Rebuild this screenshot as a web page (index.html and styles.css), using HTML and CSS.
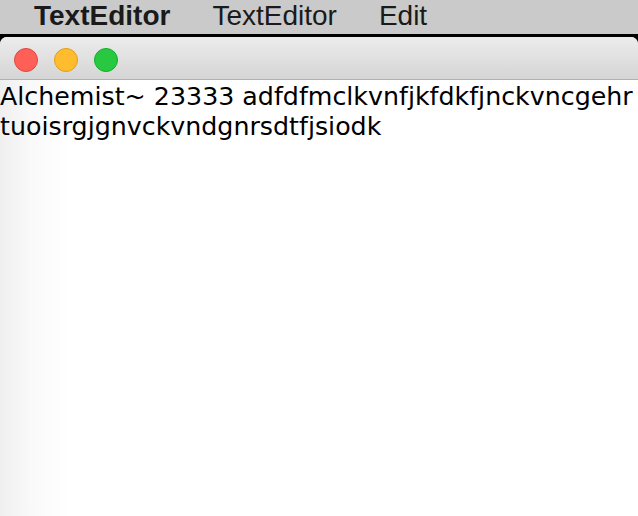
FILE: index.html
```html
<!DOCTYPE html>
<html>
<head>
<meta charset="utf-8">
<link rel="stylesheet" href="styles.css">
</head>
<body>
<div class="menubar">
  <span class="menu-item app">TextEditor</span>
  <span class="menu-item">TextEditor</span>
  <span class="menu-item">Edit</span>
</div>
<div class="window">
  <div class="titlebar">
    <span class="light red"></span>
    <span class="light yellow"></span>
    <span class="light green"></span>
  </div>
  <div class="content">
    <p class="text">Alchemist~ 23333 adfdfmclkvnfjkfdkfjnckvncgehr tuoisrgjgnvckvndgnrsdtfjsiodk</p>
  </div>
</div>
</body>
</html>
```
FILE: styles.css
```css
html, body {
  margin: 0;
  padding: 0;
  width: 638px;
  height: 516px;
  overflow: hidden;
  background: #000;
}
.menubar {
  height: 34px;
  background: #cacaca;
  display: flex;
  align-items: flex-start;
  padding-left: 34px;
  gap: 42px;
  font-family: "Liberation Sans", Arial, sans-serif;
  font-size: 28px;
  line-height: 32px;
  color: #1a1a1a;
  box-sizing: border-box;
}
.menu-item.app {
  font-weight: bold;
}
.window {
  margin-top: 3px;
  height: 479px;
  display: flex;
  flex-direction: column;
  border-radius: 7px 7px 0 0;
  overflow: hidden;
  background: #fff;
}
.titlebar {
  height: 43px;
  box-sizing: border-box;
  flex: none;
  background: linear-gradient(#ececec, #d5d5d5);
  border-bottom: 1px solid #b1b1b1;
  display: flex;
  align-items: center;
  padding-left: 14px;
  padding-top: 3px;
  gap: 16px;
}
.light {
  width: 24px;
  height: 24px;
  border-radius: 50%;
  box-sizing: border-box;
}
.red { background: #fe5f57; border: 1px solid #e2463f; }
.yellow { background: #febc2e; border: 1px solid #e1a116; }
.green { background: #28c840; border: 1px solid #14ae2a; }
.content {
  flex: 1;
  background: linear-gradient(to right, #efefef 0px, #f9f9f9 30px, #ffffff 70px);
}
.text {
  margin: 0;
  font-family: "DejaVu Sans", Verdana, sans-serif;
  font-size: 25.3px;
  line-height: 30px;
  color: #000;
  padding-top: 2px;
}
```
